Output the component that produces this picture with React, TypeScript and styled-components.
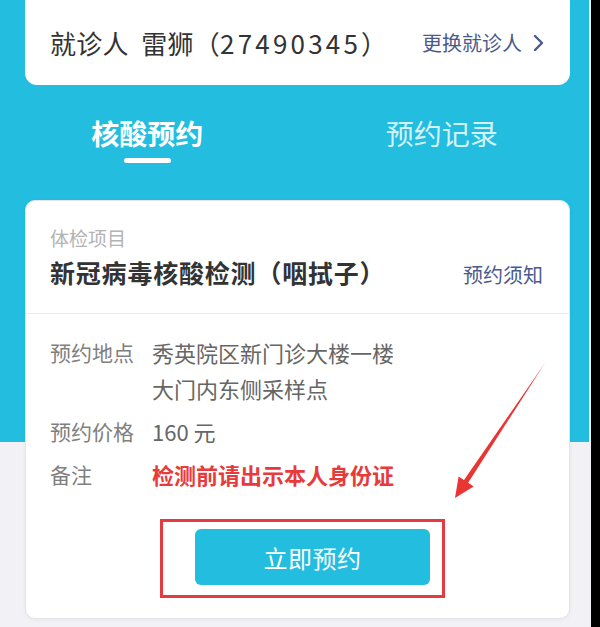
import styled, { createGlobalStyle } from 'styled-components';

const GlobalStyle = createGlobalStyle`
  html, body {
    margin: 0;
    padding: 0;
    background: #000;
  }
  body {
    font-family: "Noto Sans CJK SC", "Noto Sans", sans-serif;
  }
`;

const Frame = styled.div`
  position: relative;
  width: 600px;
  height: 627px;
  overflow: hidden;
  display: flex;
  background: #000;
`;

const Phone = styled.div`
  width: 591px;
  height: 627px;
  box-sizing: border-box;
  padding: 0 19px 0 25px;
  border-right: 2px solid #eef0f3;
  background: linear-gradient(#23bde0 0 442px, #f2f2f6 442px);
  display: flex;
  flex-direction: column;
`;

const PatientCard = styled.div`
  margin-top: -10px;
  height: 95px;
  box-sizing: border-box;
  padding: 10px 26px 0 25px;
  background: #fff;
  border-radius: 12px;
  display: flex;
  align-items: center;
  justify-content: space-between;
`;

const PatientName = styled.div`
  font-size: 26px;
  color: #333;
  letter-spacing: 0.3px;
  white-space: pre;
`;

const Digits = styled.span`
  letter-spacing: 3.2px;
`;

const LinkText = styled.div<{ $size?: number }>`
  display: flex;
  align-items: center;
  gap: 10px;
  font-size: ${(p) => p.$size ?? 20}px;
  color: #4b5a8c;
`;

const Tabs = styled.div`
  margin: 28px -19px 0 -25px;
  display: grid;
  grid-template-columns: 1fr 1fr;
`;

const Tab = styled.div<{ $active?: boolean }>`
  display: flex;
  flex-direction: column;
  align-items: center;
  font-size: 28px;
  line-height: 40px;
  font-weight: ${(p) => (p.$active ? 700 : 400)};
  color: ${(p) => (p.$active ? '#fff' : 'rgba(255,255,255,0.82)')};
  &::after {
    content: '';
    margin-top: 5px;
    width: 47px;
    height: 5px;
    border-radius: 3px;
    background: ${(p) => (p.$active ? '#fff' : 'transparent')};
  }
`;

const BookCard = styled.div`
  margin-top: 37px;
  background: #fff;
  border: 1px solid #e3e5ea;
  border-radius: 10px;
  box-shadow: 0 1px 4px rgba(0, 0, 0, 0.05);
`;

const ItemSection = styled.div`
  padding: 24px 26px 24px 24px;
  border-bottom: 1px solid #ececef;
`;

const SmallLabel = styled.div`
  font-size: 19px;
  line-height: 26px;
  color: #b3b3b3;
`;

const TitleRow = styled.div`
  margin-top: 4px;
  display: flex;
  align-items: flex-end;
  justify-content: space-between;
`;

const Title = styled.div`
  font-size: 25px;
  line-height: 34px;
  font-weight: 700;
  letter-spacing: 0.8px;
  color: #333;
`;

const DetailSection = styled.div`
  padding: 20px 24px 20px 24px;
  display: flex;
  flex-direction: column;
  gap: 7px;
`;

const Row = styled.div`
  display: flex;
  font-size: 21px;
  line-height: 36px;
`;

const RowLabel = styled.div`
  width: 102px;
  flex-shrink: 0;
  color: #808080;
`;

const RowValue = styled.div<{ $warn?: boolean }>`
  color: ${(p) => (p.$warn ? '#e83a3a' : '#666')};
  font-weight: ${(p) => (p.$warn ? 700 : 400)};
  font-size: 22px;
`;

const Highlight = styled.div`
  align-self: flex-start;
  margin: 20px 0 0 110px;
  padding: 7px 12px 10px 32px;
  border: 3px solid #e53a3f;
`;

const BookButton = styled.button`
  width: 235px;
  height: 56px;
  border: none;
  border-radius: 6px;
  background: #23bde0;
  color: #fff;
  font-family: inherit;
  font-size: 24px;
  letter-spacing: 0.5px;
  display: flex;
  align-items: center;
  justify-content: center;
`;

const Arrow = styled.svg`
  position: absolute;
  left: 0;
  top: 0;
  pointer-events: none;
`;

const Chevron = () => (
  <svg width="12" height="18" viewBox="0 0 12 18">
    <path d="M3 2 L10 9 L3 16" fill="none" stroke="#4b5a8c" strokeWidth="2.4" strokeLinecap="round" strokeLinejoin="round" />
  </svg>
);

export default function App() {
  return (
    <>
      <GlobalStyle />
      <Frame>
        <Phone>
          <PatientCard>
            <PatientName>
              就诊人  雷狮（<Digits>27490345</Digits>）
            </PatientName>
            <LinkText>
              更换就诊人
              <Chevron />
            </LinkText>
          </PatientCard>
          <Tabs>
            <Tab $active>核酸预约</Tab>
            <Tab>预约记录</Tab>
          </Tabs>
          <BookCard>
            <ItemSection>
              <SmallLabel>体检项目</SmallLabel>
              <TitleRow>
                <Title>新冠病毒核酸检测（咽拭子）</Title>
                <LinkText>预约须知</LinkText>
              </TitleRow>
            </ItemSection>
            <DetailSection>
              <Row>
                <RowLabel>预约地点</RowLabel>
                <RowValue>
                  秀英院区新门诊大楼一楼
                  <br />
                  大门内东侧采样点
                </RowValue>
              </Row>
              <Row>
                <RowLabel>预约价格</RowLabel>
                <RowValue>160 元</RowValue>
              </Row>
              <Row>
                <RowLabel>备注</RowLabel>
                <RowValue $warn>检测前请出示本人身份证</RowValue>
              </Row>
              <Highlight>
                <BookButton>立即预约</BookButton>
              </Highlight>
            </DetailSection>
          </BookCard>
        </Phone>
        <Arrow width="600" height="627" viewBox="0 0 600 627">
          <polygon
            points="545,363 468.2,482.8 473.6,486.4 455,498 458.6,476.4 464,480"
            fill="#ea3535"
          />
        </Arrow>
      </Frame>
    </>
  );
}
